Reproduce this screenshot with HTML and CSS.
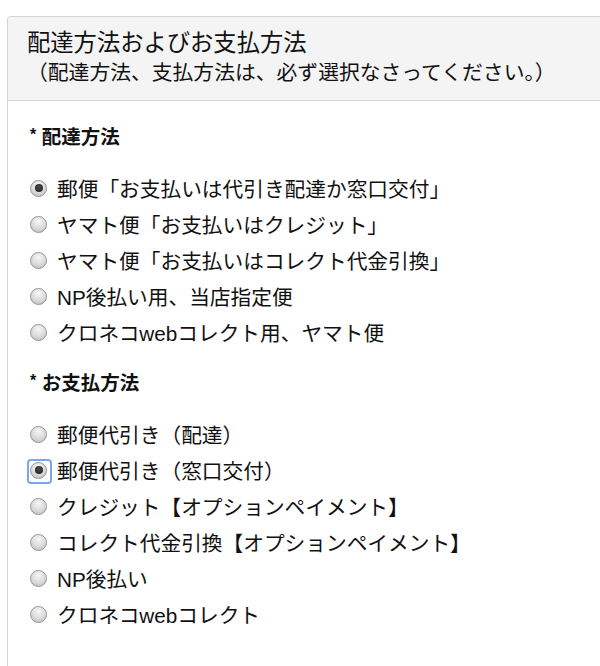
FILE: index.html
```html
<!DOCTYPE html>
<html lang="ja">
<head>
<meta charset="utf-8">
<title>配達方法およびお支払方法</title>
<link rel="stylesheet" href="styles.css">
</head>
<body>
<div class="panel">
  <div class="panel-heading">
    <h3 class="panel-title">配達方法およびお支払方法</h3>
    <p class="panel-note">（配達方法、支払方法は、必ず選択なさってください。）</p>
  </div>
  <div class="panel-body">
    <h4 class="group-title"><span class="req">*</span> 配達方法</h4>
    <label class="choice"><input type="radio" name="delivery" checked> 郵便「お支払いは代引き配達か窓口交付」</label>
    <label class="choice"><input type="radio" name="delivery"> ヤマト便「お支払いはクレジット」</label>
    <label class="choice"><input type="radio" name="delivery"> ヤマト便「お支払いはコレクト代金引換」</label>
    <label class="choice"><input type="radio" name="delivery"> NP後払い用、当店指定便</label>
    <label class="choice"><input type="radio" name="delivery"> クロネコwebコレクト用、ヤマト便</label>

    <h4 class="group-title"><span class="req">*</span> お支払方法</h4>
    <label class="choice"><input type="radio" name="payment"> 郵便代引き（配達）</label>
    <label class="choice"><input type="radio" name="payment" class="focused" checked> 郵便代引き（窓口交付）</label>
    <label class="choice"><input type="radio" name="payment"> クレジット【オプションペイメント】</label>
    <label class="choice"><input type="radio" name="payment"> コレクト代金引換【オプションペイメント】</label>
    <label class="choice"><input type="radio" name="payment"> NP後払い</label>
    <label class="choice"><input type="radio" name="payment"> クロネコwebコレクト</label>
  </div>
</div>
</body>
</html>
```

FILE: styles.css
```css
html, body {
  height: 100%;
}

body {
  margin: 0;
  background-color: #ffffff;
  font-family: "Liberation Sans", Arial, "Noto Sans CJK JP", sans-serif;
  color: #111111;
  overflow: hidden;
}

.panel {
  margin: 16px 0 0 7px;
  width: 620px;
  height: calc(100% - 16px);
  box-sizing: border-box;
  border: 1px solid #d4d4d4;
  border-bottom: none;
  border-radius: 4px 4px 0 0;
  background-color: #ffffff;
}

.panel-heading {
  background-color: #f4f4f4;
  border-bottom: 1px solid #d4d4d4;
  border-radius: 4px 4px 0 0;
  padding: 11px 19px 12px;
}

.panel-title {
  margin: 0;
  font-size: 23.3px;
  font-weight: normal;
  line-height: 30px;
}

.panel-note {
  margin: 0;
  font-size: 20.8px;
  line-height: 30px;
}

.panel-body {
  padding: 18px 22px 0;
}

.group-title {
  margin: 0 0 15px;
  font-size: 19.5px;
  font-weight: bold;
  line-height: 36px;
}

.choice + .group-title {
  margin-top: 15px;
}

.req {
  display: inline-block;
  font-size: 16px;
  line-height: 16px;
  vertical-align: top;
  margin-top: 8px;
}

.choice {
  display: flex;
  align-items: center;
  height: 36px;
  font-size: 20.7px;
}

.choice input {
  appearance: none;
  -webkit-appearance: none;
  box-sizing: border-box;
  width: 17px;
  height: 17px;
  margin: 0 10px 0 0;
  border-radius: 50%;
  border: 1px solid #959595;
  background: radial-gradient(circle at 50% 30%, #f6f6f6 0%, #dadada 55%, #b8b8b8 100%);
  flex: none;
  position: relative;
}

.choice input:checked::after {
  content: "";
  position: absolute;
  left: 3.5px;
  top: 3.5px;
  width: 8px;
  height: 8px;
  border-radius: 50%;
  background: radial-gradient(circle at 50% 40%, #4a4a4a 0%, #1c1c1c 100%);
}

.choice input.focused::before {
  content: "";
  position: absolute;
  left: -4px;
  top: -4px;
  width: 21px;
  height: 21px;
  border: 2px solid #7aa7ea;
  border-radius: 4px;
}
```
